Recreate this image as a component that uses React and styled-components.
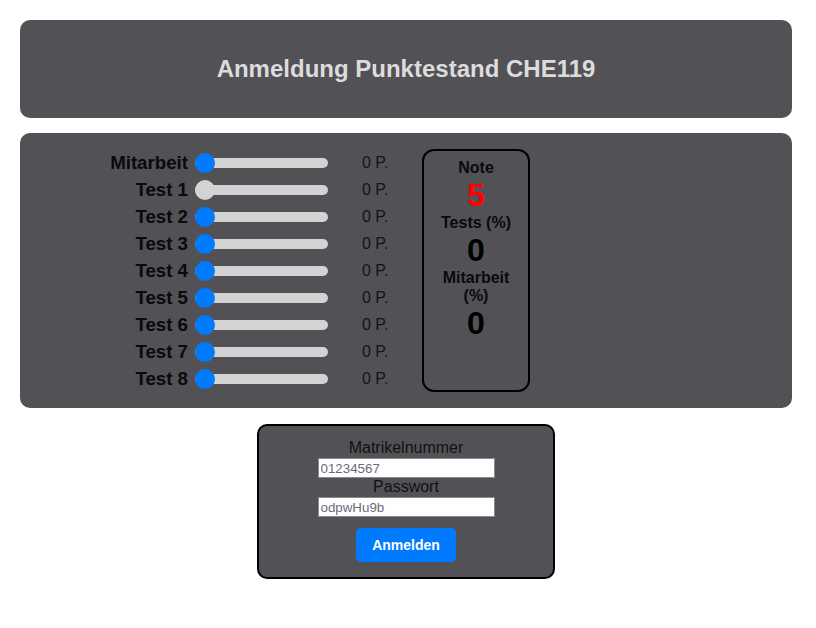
import React from "react";
import styled, { createGlobalStyle } from "styled-components";

const Global = createGlobalStyle`
  html, body { margin: 0; padding: 0; background: #ffffff; }
  body { font-family: "Liberation Sans", Arial, sans-serif; }
`;

const Page = styled.div`
  padding: 20px 24px 40px 20px;
  display: flex;
  flex-direction: column;
  align-items: stretch;
`;

const Header = styled.header`
  background: #525156;
  border-radius: 10px;
  height: 98px;
  display: flex;
  align-items: center;
  justify-content: center;
`;

const Title = styled.h2`
  margin: 0;
  color: #dcdcdc;
  font-size: 24px;
  font-weight: bold;
`;

const Panel = styled.section`
  margin-top: 15px;
  background: #525156;
  border-radius: 10px;
  padding: 16px 0;
  display: flex;
  align-items: stretch;
`;

const Rows = styled.div`
  display: grid;
  grid-template-columns: 168px 133px 87px;
  column-gap: 7px;
  grid-auto-rows: 27px;
  align-items: center;
`;

const Label = styled.label`
  text-align: right;
  font-size: 18.7px;
  font-weight: bold;
  color: #0a0a0a;
`;

const Slider = styled.input`
  -webkit-appearance: none;
  appearance: none;
  width: 133px;
  height: 10px;
  margin: 0;
  border-radius: 5px;
  background: #d3d3d3;
  outline: none;
  &::-webkit-slider-thumb {
    -webkit-appearance: none;
    appearance: none;
    width: 20px;
    height: 20px;
    border-radius: 50%;
    border: none;
    background: ${(p) => p.$thumb};
    cursor: pointer;
  }
`;

const Points = styled.span`
  padding-left: 27px;
  font-size: 16px;
  color: #141414;
`;

const ScoreBox = styled.div`
  width: 108px;
  box-sizing: border-box;
  border: 2px solid #000;
  border-radius: 12px;
  padding: 8px 8px;
  text-align: center;
  display: flex;
  flex-direction: column;
  align-items: center;
`;

const ScoreLabel = styled.div`
  font-size: 16px;
  font-weight: bold;
  color: #0a0a0a;
  line-height: 18px;
`;

const ScoreValue = styled.div`
  font-size: 32px;
  font-weight: bold;
  line-height: 37px;
  color: ${(p) => p.$color};
`;

const LoginBox = styled.form`
  margin: 16px auto 0;
  width: 298px;
  box-sizing: border-box;
  background: #525156;
  border: 2px solid #000;
  border-radius: 10px;
  padding: 13px 0 15px;
  display: flex;
  flex-direction: column;
  align-items: center;
`;

const FieldLabel = styled.label`
  font-size: 16px;
  color: #111;
  line-height: 18px;
`;

const TextInput = styled.input`
  width: 177px;
  height: 20px;
  box-sizing: border-box;
  border: 1px solid #8a8a8a;
  padding: 0 2px;
  margin: 1px 0 0;
  font-family: "Liberation Sans", Arial, sans-serif;
  font-size: 13.333px;
  color: #6b6b78;
  background: #fff;
  outline: none;
`;

const Button = styled.button`
  margin-top: 11px;
  width: 100px;
  height: 34px;
  border: none;
  border-radius: 5px;
  background: #007bff;
  color: #fff;
  font-family: "Liberation Sans", Arial, sans-serif;
  font-size: 14px;
  font-weight: bold;
  cursor: pointer;
`;

const rows = [
  { name: "Mitarbeit", thumb: "#007bff" },
  { name: "Test 1", thumb: "#d3d3d3" },
  { name: "Test 2", thumb: "#007bff" },
  { name: "Test 3", thumb: "#007bff" },
  { name: "Test 4", thumb: "#007bff" },
  { name: "Test 5", thumb: "#007bff" },
  { name: "Test 6", thumb: "#007bff" },
  { name: "Test 7", thumb: "#007bff" },
  { name: "Test 8", thumb: "#007bff" },
];

export default function App() {
  return (
    <>
      <Global />
      <Page>
        <Header>
          <Title>Anmeldung Punktestand CHE119</Title>
        </Header>
        <Panel>
          <Rows>
            {rows.map((r) => (
              <React.Fragment key={r.name}>
                <Label>{r.name}</Label>
                <Slider type="range" min="0" max="10" defaultValue="0" $thumb={r.thumb} />
                <Points>0 P.</Points>
              </React.Fragment>
            ))}
          </Rows>
          <ScoreBox>
            <ScoreLabel>Note</ScoreLabel>
            <ScoreValue $color="#ff0000">5</ScoreValue>
            <ScoreLabel>Tests (%)</ScoreLabel>
            <ScoreValue $color="#000">0</ScoreValue>
            <ScoreLabel>Mitarbeit (%)</ScoreLabel>
            <ScoreValue $color="#000">0</ScoreValue>
          </ScoreBox>
        </Panel>
        <LoginBox onSubmit={(e) => e.preventDefault()}>
          <FieldLabel>Matrikelnummer</FieldLabel>
          <TextInput type="text" defaultValue="01234567" />
          <FieldLabel>Passwort</FieldLabel>
          <TextInput type="text" defaultValue="odpwHu9b" />
          <Button type="submit">Anmelden</Button>
        </LoginBox>
      </Page>
    </>
  );
}
